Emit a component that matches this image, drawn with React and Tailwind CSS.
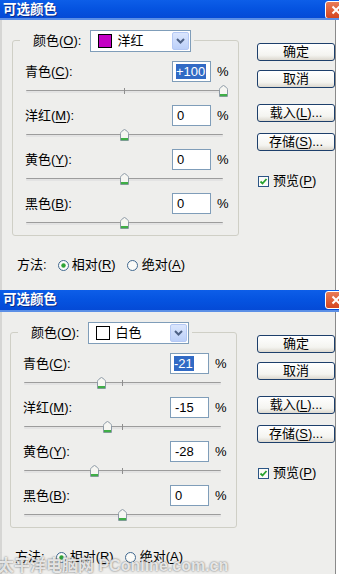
import React from "react";

function Mn({ children }) {
  return <span className="underline underline-offset-[2px]">{children}</span>;
}

function Label({ text, k }) {
  return (
    <span className="whitespace-nowrap">
      {text}(<Mn>{k}</Mn>):
    </span>
  );
}

function Thumb() {
  return (
    <svg width="9" height="12" viewBox="0 0 9 12">
      <path d="M0.5 4.5 Q0.5 3.5 1.5 2.6 L4 0.7 Q4.5 0.3 5 0.7 L7.5 2.6 Q8.5 3.5 8.5 4.5 V11.5 H0.5 Z" fill="#f6f6f2" stroke="#8d9aa6" />
      <rect x="1" y="9" width="7" height="2.2" fill="#3fae46" />
    </svg>
  );
}

function Slider({ value, last }) {
  const pos = 13 + ((value + 100) / 200) * 197;
  return (
    <div className={last ? "relative h-[21px]" : "relative h-[23px]"}>
      <div className="absolute left-[13px] top-[8px] h-[3px] w-[197px] rounded-[1px] border-t border-[#9c9c9c] bg-[#e3e3e3]" />
      <div className="absolute left-[111px] top-[6px] h-[6px] w-px bg-[#8e8e8e]" />
      <div className="absolute top-[3px] h-[12px] w-[9px]" style={{ left: pos - 4.5 }}>
        <Thumb />
      </div>
    </div>
  );
}

function Row({ label, k, value, selected, last }) {
  return (
    <div>
      <div className="flex h-[21px] items-center pl-[12px]">
        <div className="w-[147px]">
          <Label text={label} k={k} />
        </div>
        <div className="flex h-[21px] w-[39px] items-center border border-[#7f9db9] bg-white pl-[3px]">
          {selected ? (
            <span className="inline-block bg-[#316ac5] pr-[1px] leading-[15px] text-white">{value}</span>
          ) : (
            <span className="pl-[1px]">{value}</span>
          )}
        </div>
        <span className="ml-[6px]">%</span>
      </div>
      <Slider value={Number(value)} last={last} />
    </div>
  );
}

function Button({ children, className }) {
  return (
    <div
      className={
        "flex h-[18px] w-[78px] items-center justify-center rounded-[3px] border border-[#1d3f6b] bg-[linear-gradient(to_bottom,#ffffff,#f4f4f0_70%,#dcd8cf)] " +
        className
      }
    >
      {children}
    </div>
  );
}

function Radio({ checked }) {
  return (
    <svg width="11" height="11" viewBox="0 0 11 11">
      <circle cx="5.5" cy="5.5" r="5" fill="#fbfbf8" stroke="#40688f" />
      {checked && <circle cx="5.5" cy="5.5" r="2.2" fill="#2ea335" />}
    </svg>
  );
}

function Checkbox() {
  return (
    <svg width="11" height="11" viewBox="0 0 11 11">
      <rect x="0.5" y="0.5" width="10" height="10" fill="#fbfbf8" stroke="#2b5585" />
      <path d="M2.5 5.5 L4.5 7.5 L8.5 3" fill="none" stroke="#27a22e" strokeWidth="1.8" />
    </svg>
  );
}

function TitleBar({ h }) {
  return (
    <div
      className={
        "flex items-start overflow-hidden border-b-[2px] border-b-[#5b8fe6] bg-[linear-gradient(to_bottom,#0d5ee8,#0553e0_50%,#044ad6)] " +
        h
      }
    >
      <span className="pl-[3px] pt-[1px] text-[13.5px] leading-[17px] font-bold text-white [text-shadow:1px_1px_0_#0a2d8a]">
        可选颜色
      </span>
      <div className="ml-auto mr-[-8px] mt-px flex h-[18px] w-[22px] shrink-0 items-center justify-center rounded-[3px] border border-white bg-[linear-gradient(to_bottom,#e97b56,#d5461f)]">
        <svg width="10" height="10" viewBox="0 0 10 10">
          <path d="M1.5 1.5 L8.5 8.5 M8.5 1.5 L1.5 8.5" stroke="white" strokeWidth="2" />
        </svg>
      </div>
    </div>
  );
}

function Dialog({ titleH, bodyH, padL, swatch, colorName, rows }) {
  return (
    <div>
      <TitleBar h={titleH} />
      <div className={"flex w-[336px] border-l-[2px] border-r border-l-[#d6d6d4] border-r-[#8a8a8a] bg-[#eeeeec] " + bodyH + " " + padL}>
        <div className="pt-[20px]">
          <div className="w-[227px] rounded-[3px] border border-[#cfcfc6]">
            <div className="-mt-[11px] ml-[7px] flex h-[22px] w-fit items-center bg-[#eeeeec] pl-[13px] pr-[3px]">
              <Label text="颜色" k="O" />
              <div className="ml-[9px] flex h-[22px] w-[101px] items-center border border-[#7f9db9] bg-white">
                <div className={"ml-[7px] h-[14px] w-[14px] border border-black " + swatch} />
                <span className="ml-[5px]">{colorName}</span>
                <div className="ml-auto mr-px flex h-[18px] w-[17px] items-center justify-center rounded-[2px] border border-[#b4c8f4] bg-[linear-gradient(to_bottom,#dbe6fd,#bcd0f9)]">
                  <svg width="9" height="6" viewBox="0 0 9 6">
                    <path d="M1 1 L4.5 4.5 L8 1" fill="none" stroke="#4d6185" strokeWidth="2" />
                  </svg>
                </div>
              </div>
            </div>
            <div className="mt-[9px]">
              {rows.map((r, i) => (
                <Row key={r.k} {...r} last={i === rows.length - 1} />
              ))}
            </div>
          </div>
          <div className="mt-[21px] flex h-[16px] items-center pl-[5px]">
            <span>方法:</span>
            <span className="ml-[11px] flex">
              <Radio checked />
            </span>
            <span className="ml-[3px]">
              相对(<Mn>R</Mn>)
            </span>
            <span className="ml-[11px] flex">
              <Radio />
            </span>
            <span className="ml-[4px]">
              绝对(<Mn>A</Mn>)
            </span>
          </div>
        </div>
        <div className="ml-auto flex w-[78px] flex-col pt-[23px]">
          <Button>确定</Button>
          <Button className="mt-[9px]">取消</Button>
          <Button className="mt-[16px]">
            载入(<Mn>L</Mn>)...
          </Button>
          <Button className="mt-[11px]">
            存储(<Mn>S</Mn>)...
          </Button>
          <div className="mt-[22px] flex h-[16px] items-center pl-[1px]">
            <span className="flex">
              <Checkbox />
            </span>
            <span className="ml-[4px]">
              预览(<Mn>P</Mn>)
            </span>
          </div>
        </div>
      </div>
    </div>
  );
}

export default function App() {
  return (
    <div className="relative h-[574px] w-[339px] overflow-hidden bg-white text-[13px] leading-[16px] text-black font-[family-name:'Liberation_Sans','Noto_Sans_CJK_SC',sans-serif]">
      <Dialog
        titleH="h-[20px]"
        bodyH="h-[270px]"
        padL="pl-[10px]"
        swatch="bg-[#c400c4]"
        colorName="洋红"
        rows={[
          { label: "青色", k: "C", value: "+100", selected: true },
          { label: "洋红", k: "M", value: "0" },
          { label: "黄色", k: "Y", value: "0" },
          { label: "黑色", k: "B", value: "0" },
        ]}
      />
      <Dialog
        titleH="h-[22px]"
        bodyH="h-[262px]"
        padL="pl-[8px]"
        swatch="bg-white"
        colorName="白色"
        rows={[
          { label: "青色", k: "C", value: "-21", selected: true },
          { label: "洋红", k: "M", value: "-15" },
          { label: "黄色", k: "Y", value: "-28" },
          { label: "黑色", k: "B", value: "0" },
        ]}
      />
      <div className="pointer-events-none absolute left-[-2px] top-[556px] whitespace-nowrap text-[16px] font-bold leading-[20px] text-white/80 [text-shadow:0_0_2px_#555]">
        太平洋电脑网 PConline.com.cn
      </div>
    </div>
  );
}
